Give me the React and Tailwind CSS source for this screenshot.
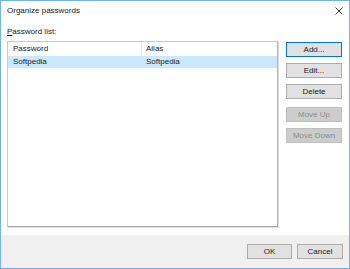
import React from 'react';

function Btn({ children, primary, disabled, className = '' }) {
  const base = 'h-[15px] flex items-center justify-center border text-[8px] leading-none';
  const look = disabled
    ? 'bg-[#cccccc] border-[#bfbfbf] text-[#8d8d8d]'
    : primary
    ? 'bg-[#e1e1e1] border-[#0078d7] text-[#1a1a1a]'
    : 'bg-[#e1e1e1] border-[#adadad] text-[#1a1a1a]';
  return <div className={`${base} ${look} ${className}`}>{children}</div>;
}

export default function App() {
  return (
    <div
      className="w-[350px] h-[269px] border border-[#74b3e8] bg-white flex flex-col overflow-hidden"
      style={{ fontFamily: '"Liberation Sans", Arial, sans-serif' }}
    >
      {/* Title bar */}
      <div className="h-[20px] flex items-center justify-between pl-[6px] pr-[5px] shrink-0">
        <span className="text-[8px] text-[#1a1a1a]">Organize passwords</span>
        <svg width="8" height="8" viewBox="0 0 8 8" className="mr-[1px]">
          <path d="M0.5 0.5 L7.5 7.5 M7.5 0.5 L0.5 7.5" stroke="#444" strokeWidth="1" />
        </svg>
      </div>

      {/* Body */}
      <div className="flex px-[6px] shrink-0">
        <div className="w-[271px] flex flex-col">
          <div className="mt-[5px] h-[12px] flex items-center text-[8px] text-[#1a1a1a]">
            <span><span className="underline">P</span>assword list:</span>
          </div>
          <div className="mt-[3px] h-[186px] border border-[#c9c9c9] border-b-[#a8a8a8] border-r-[#b5b5b5] shadow-[1px_1px_0_#dcdcdc] bg-white flex flex-col">
            <div className="h-[14px] flex text-[8px] text-[#1a1a1a]">
              <div className="w-[134px] border-r border-[#e5e5e5] flex items-center pl-[5px]">Password</div>
              <div className="flex-1 flex items-center pl-[4px]">Alias</div>
            </div>
            <div className="h-[12px] flex bg-[#cce8ff] text-[8px] text-[#1a1a1a]">
              <div className="w-[135px] flex items-center pl-[5px]">Softpedia</div>
              <div className="flex-1 flex items-center pl-[3px]">Softpedia</div>
            </div>
          </div>
        </div>

        <div className="ml-[8px] w-[56px] flex flex-col pt-[21px]">
          <Btn primary>Add...</Btn>
          <Btn className="mt-[6px]">Edit...</Btn>
          <Btn className="mt-[6px]">Delete</Btn>
          <Btn disabled className="mt-[8px]">Move Up</Btn>
          <Btn disabled className="mt-[6px]">Move Down</Btn>
        </div>
      </div>

      {/* Footer */}
      <div className="mt-[8px] flex-1 bg-[#f0f0f0] flex justify-end items-start pt-[9px] pr-[6px] gap-[5px]">
        <Btn className="w-[45px]">OK</Btn>
        <Btn className="w-[46px]">Cancel</Btn>
      </div>
    </div>
  );
}
